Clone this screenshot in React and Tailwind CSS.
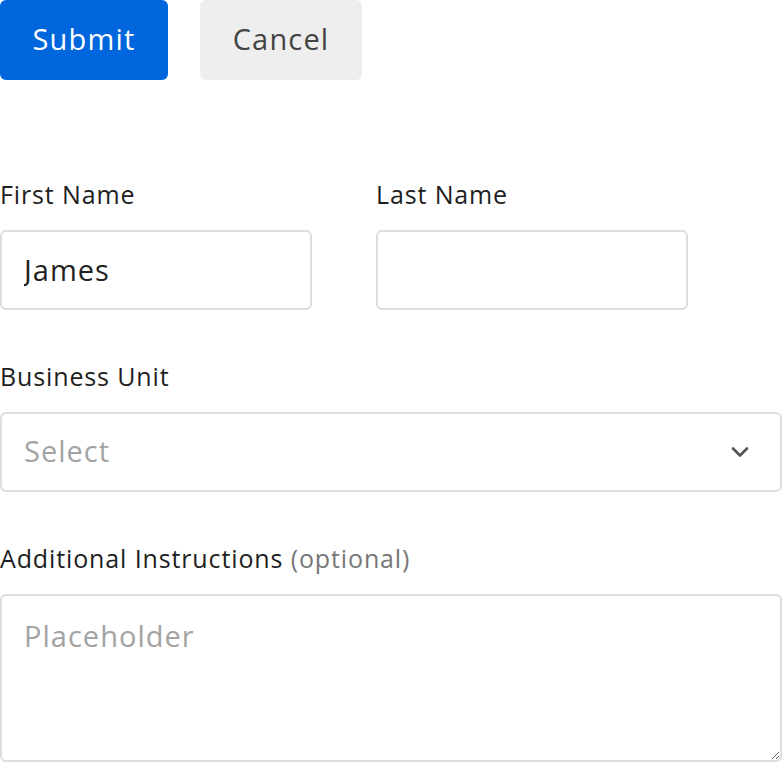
import React, { useState } from 'react';

const Label = ({ children, optional }) => (
  <label className="block text-[25px] leading-[32px] tracking-[0.035em] text-[#1e1e1e] mb-5">
    {children}
    {optional && <span className="text-[#777]"> (optional)</span>}
  </label>
);

const inputCls =
  'w-full h-[80px] border-2 border-[#dedede] rounded-md px-[22px] pb-[2px] text-[29px] tracking-[0.035em] text-[#222] placeholder:text-[#a3a3a3] outline-none bg-white';

export default function App() {
  const [first, setFirst] = useState('James');
  const [last, setLast] = useState('');

  return (
    <div className="w-[782px] h-[762px] overflow-hidden bg-white font-['Open_Sans',sans-serif]">
      <div className="flex gap-8">
        <button className="h-[80px] w-[168px] pb-[2px] rounded-md bg-[#0066dd] text-white text-[29px] tracking-[0.04em]">
          Submit
        </button>
        <button className="h-[80px] w-[162px] pb-[2px] rounded-md bg-[#eeeeee] text-[#444] text-[29px] tracking-[0.04em]">
          Cancel
        </button>
      </div>

      <form className="mt-[98px]" onSubmit={(e) => e.preventDefault()}>
        <div className="flex gap-16">
          <div className="w-[312px]">
            <Label>First Name</Label>
            <input className={inputCls} value={first} onChange={(e) => setFirst(e.target.value)} />
          </div>
          <div className="w-[312px]">
            <Label>Last Name</Label>
            <input className={inputCls} value={last} onChange={(e) => setLast(e.target.value)} />
          </div>
        </div>

        <div className="mt-[50px]">
          <Label>Business Unit</Label>
          <div className="relative">
            <select className={inputCls + ' appearance-none text-[#a3a3a3]'} defaultValue="">
              <option value="" disabled>Select</option>
              <option>Engineering</option>
              <option>Sales</option>
            </select>
            <svg
              className="absolute right-[32px] top-1/2 -translate-y-1/2 pointer-events-none"
              width="20"
              height="12"
              viewBox="0 0 20 12"
              fill="none"
            >
              <path d="M3 2.5l7 7 7-7" stroke="#555" strokeWidth="2.6" strokeLinecap="round" strokeLinejoin="round" />
            </svg>
          </div>
        </div>

        <div className="mt-[50px]">
          <Label optional>Additional Instructions</Label>
          <textarea
            className="block w-full h-[168px] border-2 border-[#dedede] rounded-md px-[22px] py-[22px] text-[29px] leading-[36px] tracking-[0.035em] text-[#222] placeholder:text-[#a3a3a3] outline-none"
            placeholder="Placeholder"
          />
        </div>
      </form>
    </div>
  );
}
